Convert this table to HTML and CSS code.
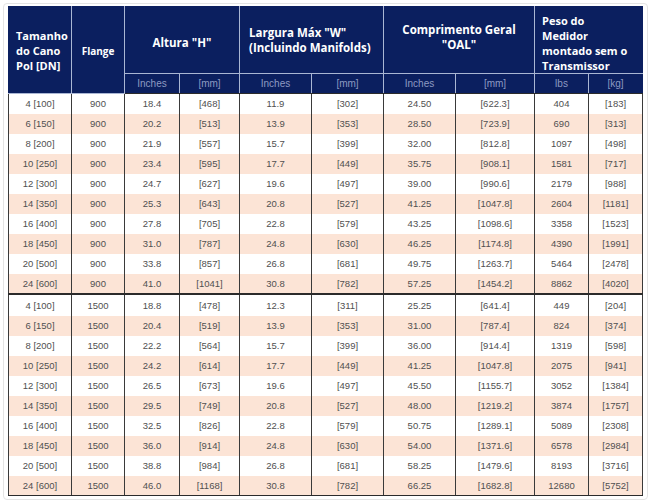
FILE: index.html
```html
<!DOCTYPE html>
<html lang="pt">
<head>
<meta charset="utf-8">
<title>Dimensões</title>
<link rel="stylesheet" href="styles.css">
</head>
<body>
<div class="frame">
<table class="spec">
  <colgroup>
    <col class="c-size"><col class="c-flange">
    <col class="c-h-in"><col class="c-h-mm">
    <col class="c-w-in"><col class="c-w-mm">
    <col class="c-l-in"><col class="c-l-mm">
    <col class="c-p-lb"><col class="c-p-kg">
  </colgroup>
  <thead>
    <tr class="top">
      <th rowspan="2" class="left mdm">Tamanho<br>do Cano<br>Pol [DN]</th>
      <th rowspan="2" class="small flange">Flange</th>
      <th colspan="2" class="big down">Altura "H"</th>
      <th colspan="2" class="left big wide">Largura Máx "W"<br>(Incluindo Manifolds)</th>
      <th colspan="2" class="big up">Comprimento Geral<br>"OAL"</th>
      <th colspan="2" class="left mdm down">Peso do<br>Medidor<br>montado sem o<br>Transmissor</th>
    </tr>
    <tr class="units">
      <th>Inches</th><th>[mm]</th>
      <th>Inches</th><th>[mm]</th>
      <th>Inches</th><th>[mm]</th>
      <th>lbs</th><th>[kg]</th>
    </tr>
  </thead>
  <tbody class="g1">
    <tr><td>4 [100]</td><td>900</td><td>18.4</td><td>[468]</td><td>11.9</td><td>[302]</td><td>24.50</td><td>[622.3]</td><td>404</td><td>[183]</td></tr>
    <tr><td>6 [150]</td><td>900</td><td>20.2</td><td>[513]</td><td>13.9</td><td>[353]</td><td>28.50</td><td>[723.9]</td><td>690</td><td>[313]</td></tr>
    <tr><td>8 [200]</td><td>900</td><td>21.9</td><td>[557]</td><td>15.7</td><td>[399]</td><td>32.00</td><td>[812.8]</td><td>1097</td><td>[498]</td></tr>
    <tr><td>10 [250]</td><td>900</td><td>23.4</td><td>[595]</td><td>17.7</td><td>[449]</td><td>35.75</td><td>[908.1]</td><td>1581</td><td>[717]</td></tr>
    <tr><td>12 [300]</td><td>900</td><td>24.7</td><td>[627]</td><td>19.6</td><td>[497]</td><td>39.00</td><td>[990.6]</td><td>2179</td><td>[988]</td></tr>
    <tr><td>14 [350]</td><td>900</td><td>25.3</td><td>[643]</td><td>20.8</td><td>[527]</td><td>41.25</td><td>[1047.8]</td><td>2604</td><td>[1181]</td></tr>
    <tr><td>16 [400]</td><td>900</td><td>27.8</td><td>[705]</td><td>22.8</td><td>[579]</td><td>43.25</td><td>[1098.6]</td><td>3358</td><td>[1523]</td></tr>
    <tr><td>18 [450]</td><td>900</td><td>31.0</td><td>[787]</td><td>24.8</td><td>[630]</td><td>46.25</td><td>[1174.8]</td><td>4390</td><td>[1991]</td></tr>
    <tr><td>20 [500]</td><td>900</td><td>33.8</td><td>[857]</td><td>26.8</td><td>[681]</td><td>49.75</td><td>[1263.7]</td><td>5464</td><td>[2478]</td></tr>
    <tr><td>24 [600]</td><td>900</td><td>41.0</td><td>[1041]</td><td>30.8</td><td>[782]</td><td>57.25</td><td>[1454.2]</td><td>8862</td><td>[4020]</td></tr>
  </tbody>
  <tbody class="g2">
    <tr><td>4 [100]</td><td>1500</td><td>18.8</td><td>[478]</td><td>12.3</td><td>[311]</td><td>25.25</td><td>[641.4]</td><td>449</td><td>[204]</td></tr>
    <tr><td>6 [150]</td><td>1500</td><td>20.4</td><td>[519]</td><td>13.9</td><td>[353]</td><td>31.00</td><td>[787.4]</td><td>824</td><td>[374]</td></tr>
    <tr><td>8 [200]</td><td>1500</td><td>22.2</td><td>[564]</td><td>15.7</td><td>[399]</td><td>36.00</td><td>[914.4]</td><td>1319</td><td>[598]</td></tr>
    <tr><td>10 [250]</td><td>1500</td><td>24.2</td><td>[614]</td><td>17.7</td><td>[449]</td><td>41.25</td><td>[1047.8]</td><td>2075</td><td>[941]</td></tr>
    <tr><td>12 [300]</td><td>1500</td><td>26.5</td><td>[673]</td><td>19.6</td><td>[497]</td><td>45.50</td><td>[1155.7]</td><td>3052</td><td>[1384]</td></tr>
    <tr><td>14 [350]</td><td>1500</td><td>29.5</td><td>[749]</td><td>20.8</td><td>[527]</td><td>48.00</td><td>[1219.2]</td><td>3874</td><td>[1757]</td></tr>
    <tr><td>16 [400]</td><td>1500</td><td>32.5</td><td>[826]</td><td>22.8</td><td>[579]</td><td>50.75</td><td>[1289.1]</td><td>5089</td><td>[2308]</td></tr>
    <tr><td>18 [450]</td><td>1500</td><td>36.0</td><td>[914]</td><td>24.8</td><td>[630]</td><td>54.00</td><td>[1371.6]</td><td>6578</td><td>[2984]</td></tr>
    <tr><td>20 [500]</td><td>1500</td><td>38.8</td><td>[984]</td><td>26.8</td><td>[681]</td><td>58.25</td><td>[1479.6]</td><td>8193</td><td>[3716]</td></tr>
    <tr><td>24 [600]</td><td>1500</td><td>46.0</td><td>[1168]</td><td>30.8</td><td>[782]</td><td>66.25</td><td>[1682.8]</td><td>12680</td><td>[5752]</td></tr>
  </tbody>
</table>
</div>
</body>
</html>
```

FILE: styles.css
```css
html, body {
  margin: 0;
  padding: 0;
  background: #ffffff;
}

.frame {
  margin: 3px 2px 2px 3px;
  padding: 2px 0 2px 4px;
  border: 1px solid #e4e4e4;
  border-radius: 4px;
  height: 497px;
  box-sizing: border-box;
}

.spec {
  border-collapse: collapse;
  table-layout: fixed;
  width: 634px;
  font-family: "Liberation Sans", Arial, sans-serif;
}

.c-size { width: 63px; }
.c-flange { width: 53px; }
.c-h-in { width: 55px; }
.c-h-mm { width: 60px; }
.c-w-in { width: 72px; }
.c-w-mm { width: 72px; }
.c-l-in { width: 72px; }
.c-l-mm { width: 79px; }
.c-p-lb { width: 54px; }
.c-p-kg { width: 54px; }

.spec th {
  background: #0b1f5f;
  color: #ffffff;
  font-family: "Open Sans", "Noto Sans", sans-serif;
  font-weight: 700;
  border: 1px solid #aab6d3;
  padding: 0;
  text-align: center;
  vertical-align: middle;
}

.spec .top {
  height: 67px;
}

.spec .top th {
  border-top-color: #0b1f5f;
}

.spec .big {
  font-size: 11.5px;
  line-height: 15px;
}

.spec .mdm {
  font-size: 11px;
  line-height: 15px;
}

.spec .small {
  font-size: 10px;
  line-height: 15px;
}

.spec .flange {
  padding-top: 2px;
}

.spec .down {
  padding-top: 5px;
}

.spec .up {
  padding-bottom: 6px;
}

.spec .left {
  text-align: left;
  padding-left: 7px;
}

.spec .wide {
  padding-left: 9px;
}

.spec thead th:first-child {
  border-left-color: #0b1f5f;
}

.spec .top th:last-child,
.spec .units th:last-child {
  border-right-color: #0b1f5f;
}

.spec .units {
  height: 20px;
}

.spec .units th {
  font-family: "Liberation Sans", Arial, sans-serif;
  font-weight: 400;
  font-size: 10px;
  color: #8d9ac2;
  border-bottom: 1px solid #2b2b2b;
}

.spec tbody tr {
  height: 20px;
}

.spec .g2 tr:first-child {
  height: 22px;
}

.spec td {
  padding: 0;
  text-align: center;
  vertical-align: middle;
  font-size: 9.5px;
  color: #505050;
  border-left: 1px solid #3a3a3a;
  border-right: 1px solid #3a3a3a;
  background: #ffffff;
}

.spec tbody tr:nth-child(even) td {
  background: #fce4d6;
}

.spec .g1 tr:first-child td {
  border-top: 1px solid #2b2b2b;
}

.spec .g2 tr:first-child td {
  border-top: 2px solid #2b2b2b;
}

.spec .g2 tr:last-child td {
  border-bottom: 1px solid #2b2b2b;
}
```
